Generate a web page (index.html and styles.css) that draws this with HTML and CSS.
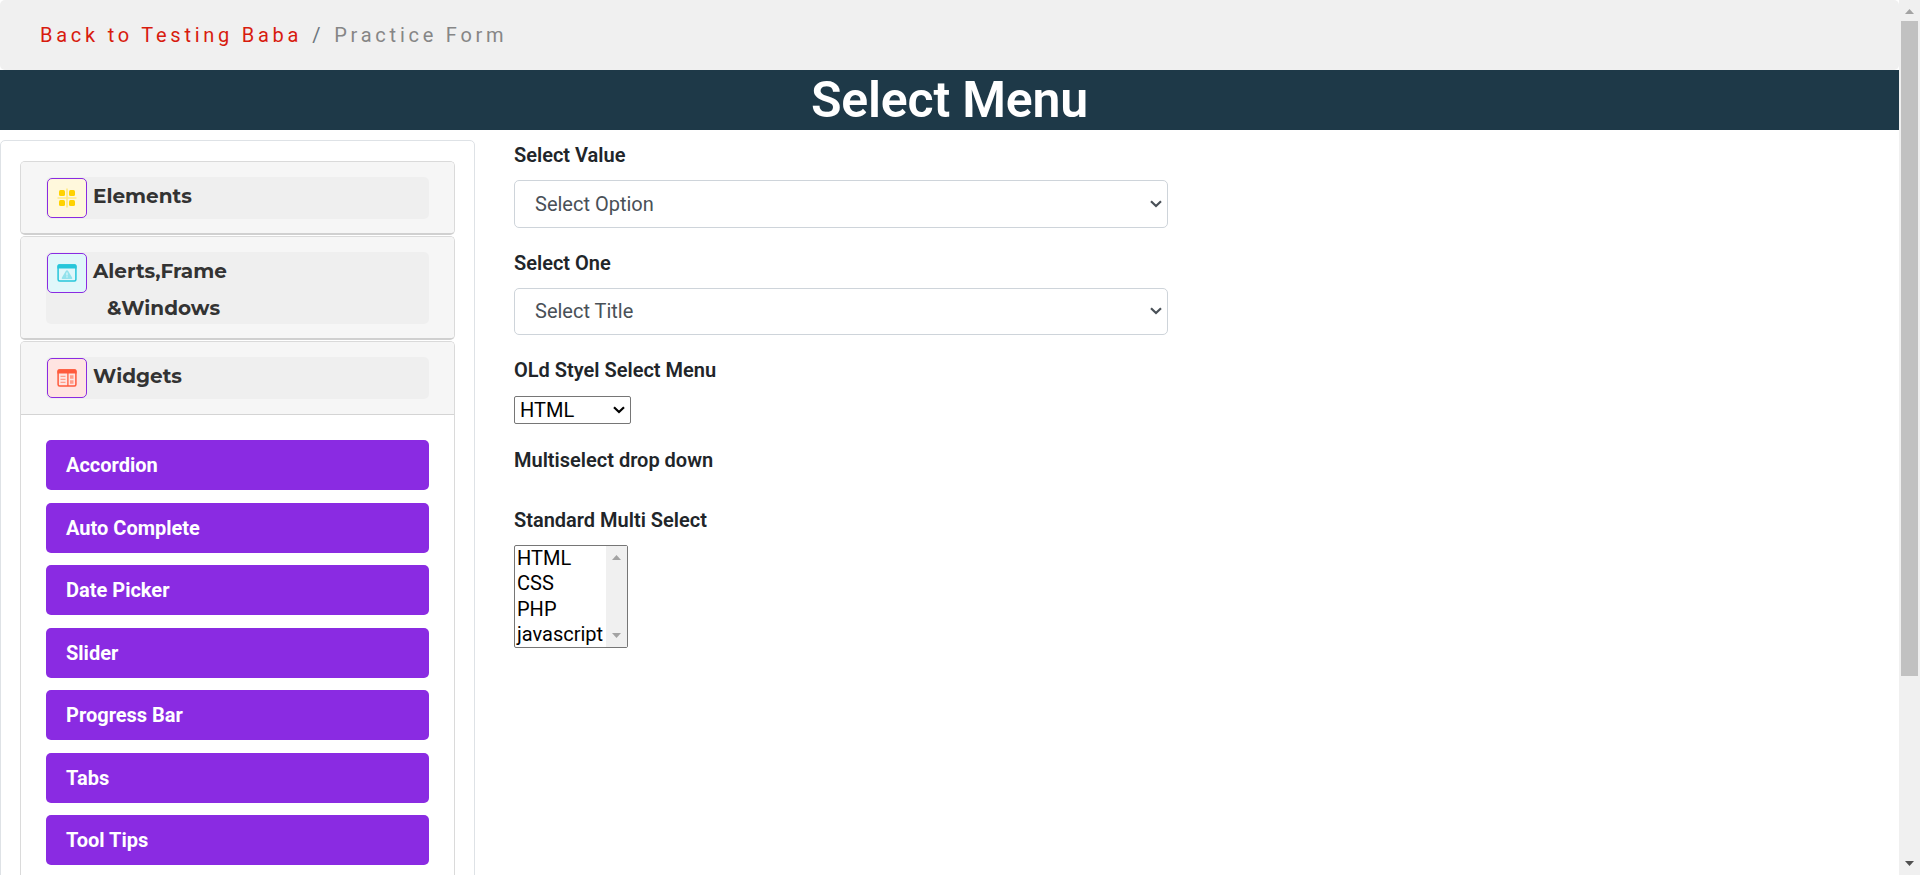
FILE: index.html
```html
<!DOCTYPE html>
<html lang="en">
<head>
<meta charset="utf-8">
<title>Select Menu</title>
<link rel="stylesheet" href="styles.css">
</head>
<body>
<div class="page">
  <nav class="breadcrumb"><a class="crumb-link">Back to Testing Baba</a><span class="crumb-sep">/</span><span class="crumb-current">Practice Form</span></nav>
  <h1 class="title">Select Menu</h1>
  <div class="layout">
    <aside class="sidebar">
      <section class="card">
        <div class="card-header">
          <div class="group">
            <span class="icon icon-yellow"><svg width="20" height="20" viewBox="0 0 20 20"><path d="M10 .5v19M.5 10h19" stroke="#ffe985" stroke-width="1.7"/><g fill="#ffd200"><rect x="2" y="2" width="6" height="6" rx="1.5"/><rect x="12" y="2" width="6" height="6" rx="1.5"/><rect x="2" y="12" width="6" height="6" rx="1.5"/><rect x="12" y="12" width="6" height="6" rx="1.5"/></g></svg></span>
            <span class="group-name">Elements</span>
          </div>
        </div>
      </section>
      <section class="card">
        <div class="card-header">
          <div class="group group-tall">
            <span class="icon icon-cyan"><svg width="20" height="20" viewBox="0 0 20 20"><rect x="1.1" y="2" width="17.8" height="15.9" rx="1.5" fill="none" stroke="#26c6da" stroke-width="1.5"/><path d="M.4 5.5V3Q.4 1.2 2.2 1.2h15.6q1.8 0 1.8 1.8v2.5z" fill="#26c6da"/><path d="M10 7.2q.8 0 1.2.8l4 6.800q.5 1.2-.8 1.2H5.600q-1.3 0-.8-1.2l4-6.8q.4-.8 1.2-.8z" fill="#92e2ec"/><path d="M10 9.5v3M10 13.3v1.3" stroke="#e0f7fa" stroke-width="1.2"/></svg></span>
            <span class="group-name">Alerts,Frame<br><span class="second-line">&amp;Windows</span></span>
          </div>
        </div>
      </section>
      <section class="card card-open">
        <div class="card-header">
          <div class="group">
            <span class="icon icon-red"><svg width="20" height="20" viewBox="0 0 20 20"><rect x="1.1" y="2" width="17.8" height="15.9" rx="1.5" fill="none" stroke="#ff5a3c" stroke-width="1.5"/><path d="M.4 5.5V3Q.4 1.2 2.2 1.2h15.6q1.8 0 1.8 1.8v2.5z" fill="#ff5a3c"/><path d="M10.9 5v13" stroke="#ff5a3c" stroke-width="1.3"/><path d="M3.5 8.3h5M3.5 11.3h5M3.5 14.3h5" stroke="#ff9d8a" stroke-width="1.2"/><path d="M13 7.2h3.5v3.5H13zM13 12.2h3.5v3.6H13z" fill="#ff9d8a"/></svg></span>
            <span class="group-name">Widgets</span>
          </div>
        </div>
        <ul class="menu">
          <li class="menu-item">Accordion</li>
          <li class="menu-item">Auto Complete</li>
          <li class="menu-item">Date Picker</li>
          <li class="menu-item">Slider</li>
          <li class="menu-item">Progress Bar</li>
          <li class="menu-item">Tabs</li>
          <li class="menu-item">Tool Tips</li>
        </ul>
      </section>
    </aside>
    <main class="content">
      <div class="field">
        <label class="label">Select Value</label>
        <div class="select-wrap"><select class="select"><option>Select Option</option></select><svg class="chevron" width="12" height="8" viewBox="0 0 12 8"><path d="M1 1.2l5 4.8 5-4.8" fill="none" stroke="currentColor" stroke-width="2.2"/></svg></div>
      </div>
      <div class="field">
        <label class="label">Select One</label>
        <div class="select-wrap"><select class="select"><option>Select Title</option></select><svg class="chevron" width="12" height="8" viewBox="0 0 12 8"><path d="M1 1.2l5 4.8 5-4.8" fill="none" stroke="currentColor" stroke-width="2.2"/></svg></div>
      </div>
      <div class="field field-old">
        <label class="label">OLd Styel Select Menu</label>
        <div class="select-wrap wrap-old"><select class="select select-old"><option>HTML</option></select><svg class="chevron" width="12" height="8" viewBox="0 0 12 8"><path d="M1 1.2l5 4.8 5-4.8" fill="none" stroke="currentColor" stroke-width="2.2"/></svg></div>
      </div>
      <div class="field">
        <label class="label">Multiselect drop down</label>
      </div>
      <div class="field">
        <label class="label">Standard Multi Select</label>
        <div class="listbox">
          <ul class="options"><li>HTML</li><li>CSS</li><li>PHP</li><li>javascript</li></ul>
          <div class="list-scroll"><i class="tri tri-up"></i><i class="tri tri-down"></i></div>
        </div>
      </div>
    </main>
  </div>
</div>
<div class="scrollbar"><i class="tri tri-up"></i><div class="thumb"></div><i class="tri tri-down tri-active"></i></div>
</body>
</html>
```
FILE: styles.css
```css
* { box-sizing: border-box; }
html, body { margin: 0; height: 875px; overflow: hidden; }
body {
  display: flex;
  background: #fff;
  color: #212529;
  font: 400 20px/30px Roboto, sans-serif;
}
ul { list-style: none; margin: 0; padding: 0; }
.page { width: 1899px; height: 875px; overflow: hidden; }

.breadcrumb {
  display: flex;
  height: 70px;
  padding: 20px 40px;
  border-radius: 5px;
  background: #f0f0f0;
  letter-spacing: 3.75px;
  white-space: pre;
}
.crumb-link { color: #d81b0e; }
.crumb-sep { color: #6c757d; padding: 0 10px; }
.crumb-current { color: #868686; }
.title {
  margin: 0;
  height: 60px;
  background: #1e3948;
  color: #fff;
  font-size: 50px;
  font-weight: 600;
  letter-spacing: -0.2px;
  line-height: 60px;
  text-align: center;
}

.layout { display: flex; padding-top: 10px; }
.sidebar {
  width: 475px;
  height: 900px;
  padding: 20px 19px;
  border: 1px solid #dee2e6;
  border-radius: 5px;
}
.card {
  margin-bottom: 1px;
  border: 1px solid #dadada;
  border-bottom: 2px solid #d0d0d0;
  border-radius: 5px;
}
.card-header { padding: 15px 25px 14px; background: #f6f6f6; border-radius: 4px; }
.card-open { height: 800px; }
.card-open .card-header { padding-bottom: 15px; border-bottom: 1px solid #d4d4d4; border-radius: 4px 4px 0 0; }
.group { display: flex; gap: 6px; height: 42px; padding: 1px; background: #efefef; border-radius: 5px; }
.group-tall { height: 72px; }
.icon {
  display: flex;
  align-items: center;
  justify-content: center;
  width: 40px;
  height: 40px;
  border: 1px solid #8a2be2;
  border-radius: 5px;
}
.icon-yellow { background: #fff8dc; }
.icon-cyan { background: #e0f7fa; }
.icon-red { background: #ffe4e1; }
.group-name {
  color: #333;
  font-family: Montserrat, Inter, sans-serif;
  font-size: 20px;
  font-weight: 700;
  line-height: 37px;
}
.second-line { padding-left: 14px; }

.menu { display: grid; gap: 12.5px; padding: 25px; }
.menu-item {
  height: 50px;
  padding: 10px 20px;
  border-radius: 5px;
  background: #8a2be2;
  color: #fff;
  font-weight: 700;
}

.content { padding-left: 39px; }
.field { margin-bottom: 20px; }
.label { display: block; height: 40px; font-weight: 600; }
.select-wrap { display: grid; width: 654px; height: 47.5px; }
.select {
  grid-area: 1 / 1;
  appearance: none;
  width: 100%;
  height: 100%;
  margin: 0;
  padding: 0 20px;
  border: 1px solid #ced4da;
  border-radius: 5px;
  background: #fff;
  color: #495057;
  font: inherit;
}
.chevron { grid-area: 1 / 1; place-self: center end; margin-right: 6px; color: #495057; pointer-events: none; }
.wrap-old { width: 117px; height: 28px; grid-template-rows: 28px; }
.select-old { padding: 0 5px; border-color: #767676; border-radius: 2px; color: #000; line-height: 26px; }
.wrap-old .chevron { color: #000; }
.field-old .label { height: 41px; }
.field-old { margin-bottom: 21px; }
.listbox {
  display: flex;
  justify-content: space-between;
  width: 114px;
  height: 103px;
  border: 1px solid #767676;
  border-radius: 2px;
  color: #000;
}
.options { padding-left: 2px; line-height: 25.3px; }
.list-scroll { display: flex; flex-direction: column; justify-content: space-between; align-items: center; width: 21px; padding: 9px 0; background: #f0f0f0; }

.tri { width: 9px; height: 5px; background: #a3a3a3; }
.tri-up { clip-path: polygon(50% 0, 100% 100%, 0 100%); }
.tri-down { clip-path: polygon(0 0, 100% 0, 50% 100%); }
.tri-active { background: #505050; }
.scrollbar { display: flex; flex-direction: column; align-items: center; width: 21px; height: 875px; padding: 9px 0; background: #f0f0f0; }
.thumb { width: 17px; height: 655px; margin: 7px 0 auto; background: #c1c1c1; }
```
